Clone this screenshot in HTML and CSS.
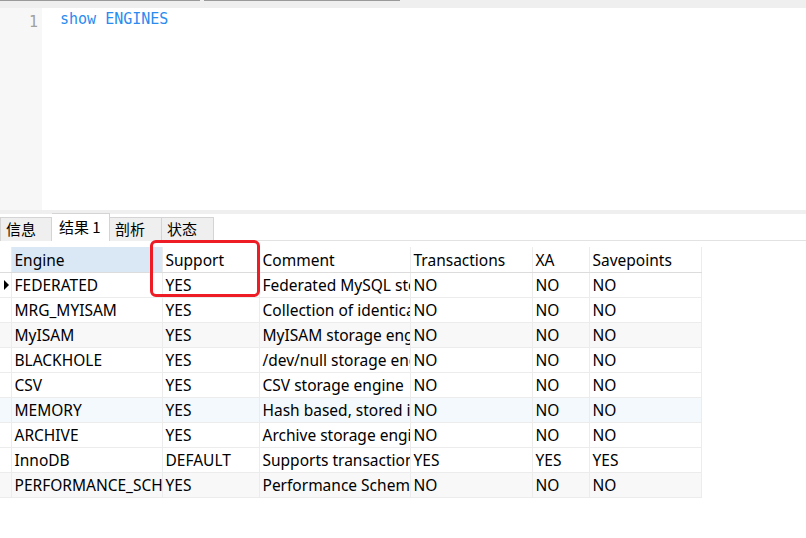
FILE: index.html
```html
<!DOCTYPE html>
<html>
<head>
<meta charset="utf-8">
<link rel="stylesheet" href="styles.css">
</head>
<body>
<div class="topstrip">
  <div class="topline l1"></div>
  <div class="topline l2"></div>
</div>
<div class="editor">
  <div class="gutter"><span class="lineno">1</span></div>
  <div class="code"><span class="kw">show ENGINES</span></div>
</div>
<div class="split"></div>
<div class="tabs">
  <div class="tab">信息</div>
  <div class="tab active">结果 1</div>
  <div class="tab">剖析</div>
  <div class="tab">状态</div>
  <div class="tabfill"></div>
</div>
<div class="grid-area">
  <table class="grid">
    <colgroup>
      <col class="c0"><col class="c1"><col class="c2"><col class="c3"><col class="c4"><col class="c5"><col class="c6">
    </colgroup>
    <thead>
      <tr><th class="ind"></th><th class="sel">Engine</th><th>Support</th><th>Comment</th><th>Transactions</th><th>XA</th><th>Savepoints</th></tr>
    </thead>
    <tbody>
      <tr><td class="ind"><span class="arrow"></span></td><td>FEDERATED</td><td>YES</td><td>Federated MySQL storage engine</td><td>NO</td><td>NO</td><td>NO</td></tr>
      <tr><td class="ind"></td><td>MRG_MYISAM</td><td>YES</td><td>Collection of identical MyISAM tables</td><td>NO</td><td>NO</td><td>NO</td></tr>
      <tr class="alt"><td class="ind"></td><td>MyISAM</td><td>YES</td><td>MyISAM storage engine</td><td>NO</td><td>NO</td><td>NO</td></tr>
      <tr><td class="ind"></td><td>BLACKHOLE</td><td>YES</td><td>/dev/null storage engine (anything you write to it disappears)</td><td>NO</td><td>NO</td><td>NO</td></tr>
      <tr><td class="ind"></td><td>CSV</td><td>YES</td><td>CSV storage engine</td><td>NO</td><td>NO</td><td>NO</td></tr>
      <tr class="hover"><td class="ind"></td><td>MEMORY</td><td>YES</td><td>Hash based, stored in memory, useful for temporary tables</td><td>NO</td><td>NO</td><td>NO</td></tr>
      <tr><td class="ind"></td><td>ARCHIVE</td><td>YES</td><td>Archive storage engine</td><td>NO</td><td>NO</td><td>NO</td></tr>
      <tr><td class="ind"></td><td>InnoDB</td><td>DEFAULT</td><td>Supports transactions, row-level locking, and foreign keys</td><td>YES</td><td>YES</td><td>YES</td></tr>
      <tr class="alt"><td class="ind"></td><td>PERFORMANCE_SCHEMA</td><td>YES</td><td>Performance Schema</td><td>NO</td><td>NO</td><td>NO</td></tr>
    </tbody>
  </table>
  <div class="highlight"></div>
</div>
</body>
</html>
```

FILE: styles.css
```css
* { box-sizing: border-box; }
html, body { margin: 0; padding: 0; background: #fff; }
body {
  width: 806px;
  height: 538px;
  overflow: hidden;
  font-family: "Noto Sans", "Noto Sans CJK SC", sans-serif;
  color: #000;
}
.topstrip {
  height: 8px;
  background: #efefef;
  display: flex;
  gap: 4px;
}
.topline { height: 1px; background: #9a9a9a; }
.l1 { width: 200px; }
.l2 { width: 196px; }
.editor {
  height: 202px;
  display: flex;
}
.gutter {
  width: 42px;
  background: #f7f7f7;
  text-align: right;
  padding: 2px 4px 0 0;
}
.lineno {
  font-family: "DejaVu Sans Mono", monospace;
  font-size: 15px;
  color: #a0a0a0;
  line-height: 18px;
}
.code {
  padding: 2px 0 0 18px;
  font-family: "DejaVu Sans Mono", monospace;
  font-size: 15px;
  line-height: 18px;
}
.kw { color: #2a8bf0; }
.split { height: 4px; background: #efefef; }
.tabs {
  height: 27px;
  display: flex;
  align-items: flex-end;
  border-bottom: 1px solid #e2e2e2;
  font-family: "Noto Sans CJK SC", sans-serif;
  font-size: 15px;
}
.tab {
  height: 24px;
  width: 52px;
  background: #efefef;
  border: 1px solid #d4d4d4;
  border-bottom: none;
  padding-left: 5px;
  line-height: 21px;
  margin-bottom: -1px;
}
.tab.active {
  width: 58px;
  height: 28px;
  background: #fff;
  padding-left: 7px;
  line-height: 25px;
  border-color: #d4d4d4;
}
.tab + .tab { border-left: none; }
.tabfill { flex: 1; }
.grid-area {
  position: relative;
  padding-top: 6px;
}
.grid {
  border-collapse: collapse;
  table-layout: fixed;
  width: 701px;
  font-size: 15.5px;
}
.c0 { width: 11px; }
.c1 { width: 151px; }
.c2 { width: 97px; }
.c3 { width: 151px; }
.c4 { width: 122px; }
.c5 { width: 57px; }
.c6 { width: 112px; }
.grid th, .grid td {
  height: 25px;
  padding: 1px 0 0 3px;
  white-space: nowrap;
  overflow: hidden;
  text-align: left;
  font-weight: normal;
  border: 1px solid #ececec;
  line-height: 22px;
}
.grid th { border-bottom: 1px solid #dcdcdc; border-top: none; }
.grid th.sel { background: #dae8f6; }
.grid .ind { padding: 0; border-left: none; }
.grid tr.alt td { background: #f8f8f8; }
.grid tr.hover td { background: #f4f9fe; }
.arrow {
  display: block;
  width: 0;
  height: 0;
  margin-left: 4px;
  border-top: 5px solid transparent;
  border-bottom: 5px solid transparent;
  border-left: 5px solid #000;
}
.highlight {
  position: absolute;
  left: 150px;
  top: -1px;
  width: 110px;
  height: 57px;
  border: 3px solid #ee1c24;
  border-radius: 6px;
}
```
